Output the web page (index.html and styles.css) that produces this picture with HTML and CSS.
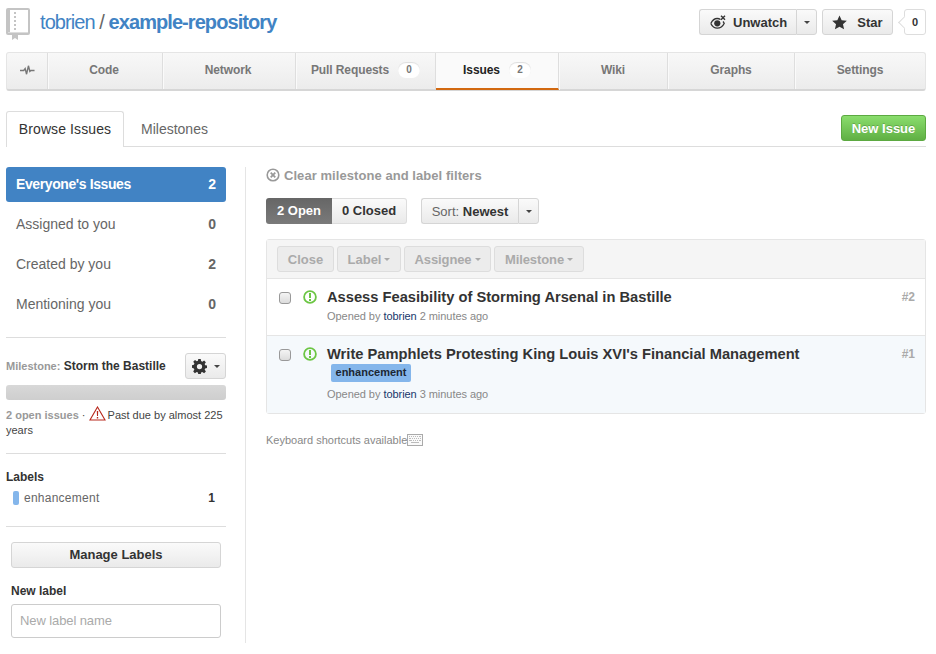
FILE: index.html
```html
<!DOCTYPE html>
<html lang="en">
<head>
<meta charset="utf-8">
<title>Issues · tobrien/example-repository</title>
<link rel="stylesheet" href="styles.css">
</head>
<body>
<div class="page">
  <header class="repohead">
    <h1 class="repo-title">
      <svg class="repo-icon" width="24" height="32" viewBox="0 0 24 32"><rect width="24" height="27" rx="2" fill="#c4c4c4"/><rect x="4" y="2" width="18" height="22" fill="#fff"/><path fill="#c4c4c4" d="M8 4h2v2H8zM8 8h2v2H8zM8 12h2v2H8zM8 16h2v2H8zM8 20h2v2H8z"/><rect x="2" y="24" width="20" height="1" fill="#ddd"/><path fill="#c4c4c4" d="M6 26h6v6l-3-2-3 2z"/></svg>
      <a class="owner">tobrien</a><span class="slash"> / </span><a class="repo-name">example-repository</a>
    </h1>
    <div class="repo-actions">
      <div class="split">
        <button class="btn btn-main watch"><svg width="16" height="14" viewBox="0 0 16 14"><path fill="none" stroke="#333" stroke-width="1.300" d="M.8 8.500C2.500 5 4.800 3.500 7.200 3.500c1.200 0 2.300.3 3.300 1M13 6.500c.5.600.9 1.300 1.200 2-1.400 2.800-3.700 4.600-7 4.600-2.800 0-5-1.700-6.400-4.600"/><circle cx="7.300" cy="8.300" r="3.100" fill="#333"/><path stroke="#333" stroke-width="1.400" d="M11 .7l4 4M15 .7l-4 4"/></svg>Unwatch</button><button class="btn btn-caret"><i class="caret"></i></button>
      </div>
      <button class="btn star"><svg width="15" height="15" viewBox="0 0 16 16"><path fill="#333" d="M8 .5l2.300 5 5.500.6-4.100 3.700 1.200 5.500L8 12.500l-4.900 2.800 1.200-5.500L.2 6.100l5.500-.6z"/></svg>Star</button>
      <span class="social-count">0</span>
    </div>
  </header>

  <nav class="reponav">
    <a class="nav-item nav-pulse"><svg width="15" height="10" viewBox="0 0 16 10"><path fill="none" stroke="#777" stroke-width="1.500" d="M0 5.500h4l1.500-2 1.500 6 2-9 1.500 6 1-1h4"/></svg></a>
    <a class="nav-item nav-code">Code</a>
    <a class="nav-item nav-network">Network</a>
    <a class="nav-item nav-pulls">Pull Requests<span class="counter">0</span></a>
    <a class="nav-item nav-issues active">Issues<span class="counter">2</span></a>
    <a class="nav-item nav-wiki">Wiki</a>
    <a class="nav-item nav-graphs">Graphs</a>
    <a class="nav-item nav-settings">Settings</a>
  </nav>

  <div class="subnav">
    <a class="subtab selected">Browse Issues</a>
    <a class="subtab">Milestones</a>
    <button class="btn-new">New Issue</button>
  </div>

  <div class="columns">
    <aside class="sidebar">
      <ul class="filters">
        <li class="filter selected"><span>Everyone's Issues</span><b>2</b></li>
        <li class="filter"><span>Assigned to you</span><b>0</b></li>
        <li class="filter"><span>Created by you</span><b>2</b></li>
        <li class="filter"><span>Mentioning you</span><b>0</b></li>
      </ul>
      <section class="milestone">
        <div class="ms-head">
          <div class="ms-title"><span class="ms-key">Milestone:</span> <strong>Storm the Bastille</strong></div>
          <button class="btn gear"><svg width="15" height="15" viewBox="0 0 16 16"><path fill="#333" fill-rule="evenodd" d="M6.700 0h2.600l.4 2.200 1.300.6 1.900-1.300 1.900 1.900-1.300 1.900.6 1.300 2 .4v2.700l-2.100.4-.5 1.200 1.300 1.900-1.900 1.900-1.900-1.300-1.300.6-.4 2.100H6.700l-.4-2.100-1.300-.6-1.900 1.300-1.800-1.900 1.200-1.900-.5-1.200L0 9.300V6.600l2-.4.600-1.300-1.300-1.900 1.900-1.900 1.900 1.300 1.200-.6zM8 5.200a2.800 2.800 0 1 0 0 5.600 2.800 2.800 0 0 0 0-5.600z"/></svg><i class="caret"></i></button>
        </div>
        <div class="progress"></div>
        <p class="ms-meta"><span class="ms-open">2 open issues</span> · <svg class="warn" width="17" height="15" viewBox="0 0 17 15"><path fill="none" stroke="#b8281c" stroke-width="1.100" d="M8.500 1L16 14H1z"/><path fill="#b8281c" d="M7.800 5h1.400l-.2 5H8zM7.800 11h1.400v1.400H7.800z"/></svg><span class="due">Past due by almost 225</span> <span>years</span></p>
      </section>
      <section class="labels">
        <h3 class="side-head">Labels</h3>
        <div class="label-row"><i class="swatch"></i><span class="label-name">enhancement</span><b>1</b></div>
      </section>
      <section class="manage">
        <button class="btn btn-block">Manage Labels</button>
        <label class="side-head new-head" for="newlabel">New label</label>
        <input class="text-input" id="newlabel" placeholder="New label name">
      </section>
    </aside>

    <main class="content">
      <a class="clear"><svg width="14" height="14" viewBox="0 0 14 14"><circle cx="7" cy="7" r="5.800" fill="none" stroke="#999" stroke-width="1.600"/><path stroke="#999" stroke-width="1.800" d="M4.700 4.700l4.600 4.600M9.300 4.700l-4.600 4.600"/></svg>Clear milestone and label filters</a>
      <div class="states">
        <div class="toggle"><a class="t-open">2 Open</a><a class="t-closed">0 Closed</a></div>
        <div class="split sort">
          <button class="btn btn-main"><span class="sort-key">Sort:</span> Newest</button><button class="btn btn-caret"><i class="caret"></i></button>
        </div>
      </div>
      <div class="issues">
        <div class="toolbar">
          <button class="tbtn tb-close">Close</button>
          <button class="tbtn tb-label">Label<i class="caret"></i></button>
          <button class="tbtn tb-assignee">Assignee<i class="caret"></i></button>
          <button class="tbtn tb-milestone">Milestone<i class="caret"></i></button>
        </div>
        <article class="issue">
          <input type="checkbox" class="check">
          <svg class="open-icon" width="14" height="14" viewBox="0 0 14 14"><circle cx="7" cy="7" r="5.900" fill="none" stroke="#6cc644" stroke-width="1.800"/><path fill="#6cc644" d="M6 3h2v5H6zM6 9h2v2H6z"/></svg>
          <div class="issue-body">
            <h4 class="issue-title">Assess Feasibility of Storming Arsenal in Bastille</h4>
            <p class="byline">Opened by <a>tobrien</a> 2 minutes ago</p>
          </div>
          <span class="num">#2</span>
        </article>
        <article class="issue second">
          <input type="checkbox" class="check">
          <svg class="open-icon" width="14" height="14" viewBox="0 0 14 14"><circle cx="7" cy="7" r="5.900" fill="none" stroke="#6cc644" stroke-width="1.800"/><path fill="#6cc644" d="M6 3h2v5H6zM6 9h2v2H6z"/></svg>
          <div class="issue-body">
            <h4 class="issue-title">Write Pamphlets Protesting King Louis XVI's Financial Management</h4>
            <span class="tag">enhancement</span>
            <p class="byline">Opened by <a>tobrien</a> 3 minutes ago</p>
          </div>
          <span class="num">#1</span>
        </article>
      </div>
      <p class="shortcuts">Keyboard shortcuts available<svg width="16" height="12" viewBox="0 0 16 12"><rect x=".5" y=".5" width="15" height="11" fill="#fafafa" stroke="#aaa"/><path stroke="#bbb" d="M2 2.500h1M4 2.500h1M6 2.500h1M8 2.500h1M10 2.500h1M12 2.500h2M2 4.500h2M5 4.500h1M7 4.500h1M9 4.500h1M11 4.500h1M13 4.500h1M2 6.500h3M6 6.500h1M8 6.500h1M10 6.500h1M12 6.500h2M4 8.500h8"/></svg></p>
    </main>
  </div>
</div>
</body>
</html>
```
FILE: styles.css
```css
* { box-sizing: border-box; }
html, body { margin: 0; padding: 0; background: #fff; }
body { font-family: "Liberation Sans", Arial, sans-serif; font-size: 13px; color: #333; overflow: hidden; }
h1, h3, h4, p, ul { margin: 0; padding: 0; }
button { font-family: inherit; margin: 0; }
.page { width: 936px; height: 654px; padding: 0 10px 0 6px; }

.repohead { height: 52px; display: flex; justify-content: space-between; }
.repo-title { display: flex; align-items: flex-start; font-size: 20px; line-height: 28px; font-weight: 400; letter-spacing: -.93px; padding-top: 8px; white-space: pre; }
.repo-icon { margin-right: 10px; flex: none; }
.owner { color: #4183c4; }
.slash { color: #666; }
.repo-name { color: #4183c4; font-weight: 700; }
.repo-actions { display: flex; align-items: flex-start; padding-top: 9px; }
.split { display: flex; }

.btn { height: 26px; padding: 0 10px; border: 1px solid #d5d5d5; border-radius: 3px; background: linear-gradient(#fafafa, #eaeaea); color: #333; font-size: 13px; font-weight: 700; display: inline-flex; align-items: center; justify-content: center; }
.btn-main { border-radius: 3px 0 0 3px; border-right: 0; }
.btn-caret { border-radius: 0 3px 3px 0; width: 21px; padding: 0; }
.caret { display: inline-block; width: 0; height: 0; border: 3px solid transparent; border-top-color: #444; border-bottom: 0; }
.watch { width: 97px; padding: 0 0 0 10px; gap: 7px; justify-content: flex-start; }
.star { width: 71px; margin-left: 5px; gap: 10px; padding: 0; }
.social-count { position: relative; margin-left: 11px; width: 22px; height: 26px; border: 1px solid #ddd; border-radius: 3px; font-size: 11px; font-weight: 700; line-height: 24px; text-align: center; }
.social-count::before { content: ""; position: absolute; left: -5px; top: 8px; width: 8px; height: 8px; background: #fff; border-left: 1px solid #ddd; border-bottom: 1px solid #ddd; transform: rotate(45deg); }

.reponav { display: flex; height: 39px; border: 1px solid #e5e5e5; border-bottom: 2px solid #d6d6d6; border-radius: 3px; background: linear-gradient(#f8f8f8, #ececec); }
.nav-item { display: flex; align-items: center; justify-content: center; padding-bottom: 2px; border-right: 1px solid #dedede; box-shadow: 1px 0 0 #fafafa; color: #777; font-weight: 700; font-size: 12px; letter-spacing: -.1px; height: 36px; }
.nav-pulse { width: 41px; }
.nav-code { width: 115px; padding-right: 2px; }
.nav-network { width: 133px; padding-right: 2px; }
.nav-pulls { width: 140px; }
.nav-issues { width: 123px; }
.nav-wiki { width: 109px; }
.nav-graphs { width: 127px; }
.nav-settings { flex: 1; border-right: 0; box-shadow: none; }
.nav-item.active { color: #222; background: #fafafa; height: 37px; padding-bottom: 1px; border-bottom: 2px solid #d26911; }
.counter { margin-left: 9px; width: 22px; height: 16px; border-radius: 8px; background: #fff; box-shadow: inset 0 1px 1px #ddd; color: #777; font-size: 10px; line-height: 16px; text-align: center; }

.subnav { display: flex; align-items: flex-start; margin-top: 20px; height: 36px; border-bottom: 1px solid #ddd; }
.subtab { height: 36px; padding: 0 13px; line-height: 36px; font-size: 14px; color: #666; }
.subtab.selected { width: 118px; padding: 0; line-height: 34px; letter-spacing: .1px; text-align: center; color: #333; background: #fff; border: 1px solid #ddd; border-bottom: 0; border-radius: 3px 3px 0 0; }
.subtab + .subtab { margin-left: 4px; }
.btn-new { margin-left: auto; margin-top: 4px; width: 85px; height: 26px; border: 1px solid #5ca941; border-radius: 3px; background: linear-gradient(#8add6d, #60b044); color: #fff; font-size: 13px; font-weight: 700; text-shadow: 0 -1px 0 rgba(0, 0, 0, .2); padding: 0; }

.columns { display: flex; margin-top: 20px; }
.sidebar { width: 240px; height: 476px; padding-right: 19px; border-right: 1px solid #e5e5e5; }
.filters { list-style: none; height: 171px; border-bottom: 1px solid #ddd; }
.filter { display: flex; justify-content: space-between; height: 40px; line-height: 34px; padding: 0 10px; font-size: 14px; color: #666; }
.filter b { color: #666; }
.filter.selected { height: 35px; margin-bottom: 5px; background: #4183c4; color: #fff; border-radius: 3px; font-weight: 700; }
.filter.selected span { letter-spacing: -.4px; }
.filter.selected b { color: #fff; }
.filter:not(.selected) { line-height: 35px; }

.milestone { height: 116px; border-bottom: 1px solid #ddd; padding-top: 15px; }
.ms-head { display: flex; justify-content: space-between; align-items: center; height: 26px; }
.ms-title { font-size: 12px; }
.ms-key { font-size: 11px; font-weight: 700; color: #999; }
.ms-title strong { color: #333; }
.gear { width: 41px; padding: 0; gap: 7px; }
.progress { height: 15px; margin-top: 6px; border-radius: 3px; background: linear-gradient(#d8d8d8, #cecece); }
.ms-meta { margin-top: 6px; font-size: 11px; line-height: 15px; color: #444; }
.ms-open { font-weight: 700; color: #999; }
.warn { vertical-align: -2px; }
.due { margin-left: 2px; }

.labels { height: 73px; border-bottom: 1px solid #ddd; padding-top: 16px; }
.side-head { display: block; font-size: 12px; line-height: 14px; font-weight: 700; color: #333; }
.label-row { display: flex; align-items: center; height: 14px; margin-top: 7px; padding: 0 11px 0 7px; font-size: 12px; color: #666; }
.swatch { width: 6px; height: 14px; border-radius: 2px; background: #84b6eb; margin-right: 5px; }
.label-name { flex: 1; letter-spacing: .25px; }
.label-row b { color: #333; }

.manage { padding: 15px 5px 0; }
.btn-block { width: 100%; padding-bottom: 2px; }
.new-head { margin-top: 16px; }
.text-input { display: block; width: 100%; height: 34px; margin-top: 6px; padding: 0 8px 2px; border: 1px solid #ccc; border-radius: 3px; font: 13px "Liberation Sans", Arial, sans-serif; letter-spacing: -.1px; }
.text-input::placeholder { color: #aaa; opacity: 1; }

.content { margin-left: 20px; width: 660px; }
.clear { display: flex; align-items: center; gap: 4px; height: 16px; font-size: 13px; font-weight: 700; letter-spacing: .06px; color: #999; }
.states { display: flex; gap: 14px; margin-top: 15px; height: 26px; }
.toggle { display: flex; font-size: 13px; font-weight: 700; line-height: 26px; }
.toggle a { display: block; height: 26px; text-align: center; }
.t-open { width: 66px; background: linear-gradient(#666, #7a7a7a); color: #fff; border-radius: 3px 0 0 3px; }
.t-closed { width: 75px; border: 1px solid #ddd; border-left: 0; border-radius: 0 3px 3px 0; line-height: 24px; background: linear-gradient(#fafafa, #eaeaea); }
.sort .btn-main { width: 97px; padding: 0; white-space: pre; font-weight: 700; }
.sort-key { font-weight: 400; color: #666; }

.issues { margin-top: 15px; border: 1px solid #e5e5e5; border-radius: 3px; }
.toolbar { display: flex; gap: 3px; height: 39px; padding: 6px 10px 0; background: #f5f5f5; border-bottom: 1px solid #e5e5e5; }
.tbtn { height: 26px; padding: 0; justify-content: center; border: 1px solid #ddd; border-radius: 3px; background: #ececec; color: #aaa; font-size: 13px; font-weight: 700; display: inline-flex; align-items: center; gap: 3px; }
.tb-close { width: 57px; }
.tb-label { width: 64px; }
.tb-assignee { width: 87px; letter-spacing: -.1px; }
.tb-milestone { width: 90px; letter-spacing: -.1px; }
.tbtn .caret { border-top-color: #aaa; }
.issue { display: flex; align-items: flex-start; height: 57px; padding: 9px 10px 0 12px; border-bottom: 1px solid #e5e5e5; }
.issue.second { height: 77px; background: #f5f9fc; border-bottom: 0; }
.check { appearance: none; width: 12px; height: 12px; margin: 4px 0 0 0; flex: none; border: 1px solid #999; border-radius: 3px; background: linear-gradient(#f4f4f4, #dcdcdc); }
.open-icon { margin: 2px 10px 0 12px; flex: none; }
.issue-body { flex: 1; }
.issue-title { font-size: 14.7px; line-height: 18px; font-weight: 700; color: #333; }
.byline { margin-top: 3px; font-size: 11px; line-height: 14px; letter-spacing: -.05px; color: #888; }
.byline a { color: #18376b; }
.second .byline { margin-top: 5px; }
.tag { display: block; width: 80px; height: 18px; margin: 1px 0 0 4px; background: #84b6eb; border-radius: 2px; color: #1c2733; font-size: 11px; font-weight: 700; line-height: 17px; text-align: center; }
.num { margin-top: 2px; font-size: 12px; font-weight: 700; color: #aaa; }
.shortcuts { display: flex; align-items: center; margin-top: 19px; font-size: 11px; line-height: 14px; color: #888; }
```
